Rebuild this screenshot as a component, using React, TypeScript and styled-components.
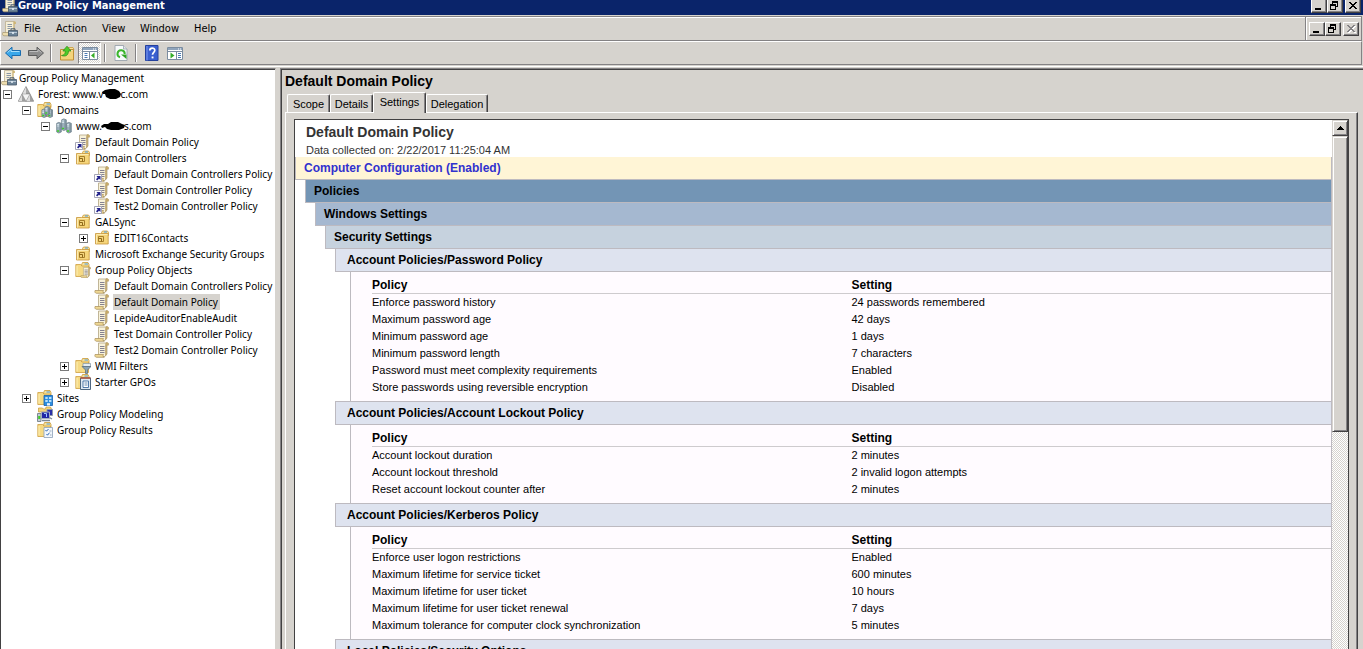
import React from "react";
import styled, { createGlobalStyle, css } from "styled-components";

const face = "#d6d3ce";
const shadow = "#848284";
const dark = "#424142";
const rule = "#bdbac0";
const uiFont = `"DejaVu Sans Condensed", "DejaVu Sans", sans-serif`;
const treeFont = `"Noto Sans", sans-serif`;
const reportFont = `"Liberation Sans", Arial, sans-serif`;

const GlobalStyle = createGlobalStyle`
  * { box-sizing: border-box; }
  body { margin: 0; background: ${face}; }
  button { font: inherit; color: inherit; margin: 0; padding: 0; border: 0; background: none; }
`;

const Window = styled.div`
  display: flex;
  flex-direction: column;
  height: 100vh;
  overflow: hidden;
  background: ${face};
  color: #000;
  font: 11px/16px ${uiFont};
`;

/* Title bar */

const TitleBar = styled.header`
  display: flex;
  align-items: flex-end;
  flex: none;
  height: 15px;
  padding: 0 2px 2px;
  overflow: hidden;
  background: #0a246a;
  color: #fff;
`;

const TitleText = styled.h1`
  margin: 0;
  flex: 1;
  font-size: 11px;
  line-height: 14px;
  font-weight: bold;
`;

const CaptionGroup = styled.div`
  display: flex;
  align-items: center;
`;

const CaptionButton = styled.button<{ $apart?: boolean }>`
  display: flex;
  flex: none;
  width: 16px;
  height: 14px;
  margin-left: ${(p) => (p.$apart ? 2 : 0)}px;
  border: 1px solid;
  border-color: #fff ${dark} ${dark} #fff;
  background: ${face};
  box-shadow: inset -1px -1px ${shadow};
`;

/* Menu and toolbar */

const MenuBar = styled.nav`
  display: flex;
  flex: none;
  height: 25px;
  margin: 1px 1px 0 0;
  border-top: 1px solid ${shadow};
  border-right: 1px solid ${shadow};
  border-bottom: 1px solid ${shadow};
  box-shadow: inset 1px 1px #fff;
`;

const MenuItems = styled.div`
  display: flex;
  align-items: center;
  flex: 1;
  padding-left: 2px;
  border-right: 1px solid ${shadow};
`;

const MenuItem = styled.button<{ $width: number }>`
  width: ${(p) => p.$width}px;
  height: 18px;
  padding-left: 6px;
  text-align: left;
`;

const ChildCaption = styled(CaptionGroup)`
  padding: 0 2px;
  border-left: 1px solid #fff;
`;

const ToolBar = styled.div`
  display: flex;
  align-items: center;
  flex: none;
  height: 24px;
  margin-right: 1px;
  border: 1px solid;
  border-color: #fff ${shadow} ${shadow} #fff;
`;

const ToolButton = styled.button<{ $pressed?: boolean }>`
  display: flex;
  align-items: center;
  justify-content: center;
  width: 23px;
  height: 22px;
  ${(p) =>
    p.$pressed &&
    css`
      border: 1px solid;
      border-color: ${shadow} #fff #fff ${shadow};
      background: repeating-conic-gradient(#fff 0 25%, ${face} 0 50%) 0 0 / 2px 2px;
    `}
`;

const ToolSeparator = styled.span`
  width: 2px;
  height: 18px;
  margin: 0 3px;
  border-left: 1px solid ${shadow};
  border-right: 1px solid #fff;
`;

/* Panes */

const Panes = styled.main`
  display: flex;
  flex: 1;
  min-height: 0;
  gap: 4px;
  margin-top: 1px;
  padding-top: 1px;
  border-top: 1px solid #fff;
`;

const Sunken = styled.section`
  padding: 1px 0 0 1px;
  border-top: 1px solid ${shadow};
  box-shadow: inset 1px 1px ${dark};
`;

const TreePane = styled(Sunken)`
  flex: none;
  width: 276px;
  overflow: hidden;
  border-right: 1px solid ${face};
  background: #fff;
`;

const Tree = styled.ul`
  margin: 0;
  padding: 0;
  list-style: none;
  font-family: ${treeFont};
  font-size: 10px;
`;

const TreeRow = styled.li<{ $level: number }>`
  display: flex;
  align-items: center;
  height: 16px;
  padding-left: ${(p) => (p.$level === 0 ? 0 : p.$level * 19 - 17)}px;
  white-space: nowrap;
`;

const Toggle = styled.button`
  display: flex;
  flex: none;
  width: 9px;
  height: 9px;
  margin-right: 6px;
`;

const NoToggle = styled.span`
  flex: none;
  width: 15px;
`;

const Label = styled.span<{ $selected?: boolean; $root?: boolean }>`
  display: flex;
  align-items: center;
  height: 16px;
  margin-left: ${(p) => (p.$root ? 1 : 3)}px;
  padding: 0 2px 0 1px;
  background: ${(p) => (p.$selected ? face : "transparent")};
`;

const Icon = styled.svg`
  display: block;
  flex: none;
`;

const Scribble = styled.svg`
  display: block;
  flex: none;
  margin: 0 -1px;
`;

const DetailPane = styled(Sunken)`
  display: flex;
  flex-direction: column;
  flex: 1;
  min-width: 0;
  border-left: 1px solid ${shadow};
  font-family: ${reportFont};
`;

const PaneTitle = styled.h2`
  margin: 0;
  padding: 3px 3px 0;
  height: 22px;
  font-size: 14px;
  line-height: 16px;
`;

const Tabs = styled.div`
  display: flex;
  align-items: flex-end;
  height: 20px;
  padding-left: 5px;
`;

const Tab = styled.button<{ $width: number; $active?: boolean }>`
  position: relative;
  width: ${(p) => p.$width}px;
  height: ${(p) => (p.$active ? 21 : 18)}px;
  padding-bottom: ${(p) => (p.$active ? 2 : 0)}px;
  margin-bottom: ${(p) => (p.$active ? -1 : 0)}px;
  line-height: 16px;
  text-align: center;
  border: solid;
  border-width: 1px 1px 0 1px;
  border-color: #fff ${dark} #fff #fff;
  border-radius: 2px 2px 0 0;
  background: ${face};
  box-shadow: inset -1px 0 ${shadow};
`;

const TabPage = styled.div`
  display: flex;
  flex: 1;
  min-height: 0;
  margin: 0 5px 0 3px;
  padding: 6px 8px 0 8px;
  border: solid;
  border-width: 1px 1px 0 1px;
  border-color: #fff ${dark} #fff #fff;
  box-shadow: inset -1px 0 ${shadow};
`;

const ReportFrame = styled.div`
  display: flex;
  flex: 1;
  min-width: 0;
  border: solid ${dark};
  border-width: 1px 1px 0 1px;
  background: #fff;
`;

/* Report */

const Report = styled.article`
  flex: 1;
  min-width: 0;
  overflow: hidden;
`;

const ReportHead = styled.header`
  height: 37px;
  padding: 4px 11px 0;
  color: #333;
`;

const ReportTitle = styled.h3`
  margin: 0;
  font-size: 14px;
  line-height: 17px;
`;

const ReportDate = styled.p`
  margin: 0;
  line-height: 19px;
  white-space: nowrap;
`;

const Band = styled.h4<{ $indent: number; $bg: string; $color?: string; $pad?: number; $ruled?: boolean }>`
  margin: 0 0 0 ${(p) => p.$indent}px;
  padding-left: ${(p) => p.$pad ?? 8}px;
  border: solid ${rule};
  border-width: ${(p) => (p.$ruled ? 1 : 0)}px 1px 1px 1px;
  background: ${(p) => p.$bg};
  color: ${(p) => p.$color ?? "#000"};
  font-size: 12px;
  line-height: 22px;
`;

const SectionBody = styled.div`
  margin-left: 55px;
  padding: 0 0 5px 21px;
  border-left: 1px solid ${rule};
  border-right: 1px solid ${rule};
  background: #fffbff;
`;

const PolicyTable = styled.table`
  width: 100%;
  table-layout: fixed;
  border-collapse: separate;
  border-spacing: 0;
  text-align: left;

  th {
    padding: 5px 0 0;
    border-bottom: 1px solid #cecbce;
    font-size: 12px;
    line-height: 16px;
  }

  td {
    padding: 0;
    line-height: 17px;
    white-space: nowrap;
  }
`;

/* Scroll bar of the report */

const ScrollTrack = styled.div`
  display: flex;
  flex-direction: column;
  flex: none;
  width: 16px;
  background: repeating-conic-gradient(#fff 0 25%, ${face} 0 50%) 0 0 / 2px 2px;
`;

const raised = css`
  border: 1px solid;
  border-color: ${face} ${dark} ${dark} ${face};
  background: ${face};
  box-shadow: inset 1px 1px #fff, inset -1px -1px ${shadow};
`;

const ScrollUp = styled.button`
  ${raised}
  display: flex;
  align-items: center;
  justify-content: center;
  flex: none;
  height: 16px;
`;

const ScrollThumb = styled.div`
  ${raised}
  flex: none;
  height: 56%;
`;

/* Icon drawings, all on a 16 by 16 grid */

const Scroll = ({ x = 0, y = 0 }: { x?: number; y?: number }) => (
  <g transform={`translate(${x} ${y})`}>
    <path d="M4.500 1h8.500v11l-2 2.500H3.500l1-2.500z" fill="#f8f2da" stroke="#b3a582" strokeWidth=".8" />
    <path d="M12 .8c2-.8 3 .5 2.500 2.400h-2v9l-1 1.500V3z" fill="#cdb06c" stroke="#a88f58" strokeWidth=".5" />
    <path d="M1 12.500h8.500c-.8.800-.5 2.800.8 2.800H2.500c-1.200 0-2-1.300-1.500-2.800z" fill="#efd893" stroke="#a68d58" strokeWidth=".7" />
    <path d="M6 4.500h4.500M6 6.500h4.500M6 8.500h4.500M6 10.500h4.500" stroke="#85828f" />
  </g>
);

const Folder = () => (
  <g>
    <path d="M6.500 3l1-2.500h5.500l1 2v3h-7z" fill="#f7e19a" stroke="#c99a38" strokeWidth=".8" />
    <path d="M9.500 2h3.500" stroke="#4a9be0" />
    <path d="M.8 2.500h5l1 1.500h6.700v10.500H.8z" fill="#f6da84" stroke="#cf9f40" strokeWidth=".8" />
    <path d="M2 4v9.500" stroke="#fdf0b8" />
  </g>
);

const Server = ({ x, y, h = 9 }: { x: number; y: number; h?: number }) => (
  <g transform={`translate(${x} ${y})`}>
    <path d={`M.4 1.300L2.500.4 5 1.300V${h - 1}L2.500 ${h}L.4 ${h - 1}z`} fill="#9fb2be" stroke="#5e7280" strokeWidth=".7" />
    <path d="M.8 2.500h2.200M.8 4h2.200" stroke="#e6f0f6" strokeWidth=".8" />
    <path d={`M.8 ${h - 2}h2`} stroke="#38d020" strokeWidth="1.500" />
    <path d={`M3.800 1.500v${h - 2.5}`} stroke="#71858f" />
  </g>
);

type IconName =
  | "console" | "forest" | "domains" | "domain" | "link" | "ou" | "gpos" | "gpo" | "wmi" | "starter"
  | "sites" | "modeling" | "results" | "back" | "forward" | "up" | "paneTree" | "refresh" | "help" | "paneAction";

const drawings: Record<IconName, React.ReactNode> = {
  console: (
    <>
      <path d="M3.500.5h8.500v10l-1 2.500h-8l.5-2z" fill="#f6efd8" stroke="#b5a787" strokeWidth=".7" />
      <path d="M11.500.5c2.200-.6 2.800 1 2.300 2.500h-1.300v6h-1z" fill="#cfb574" />
      <path d="M5.500 3.500h4.500M5.500 5.500h4.500M5.500 7.500h3" stroke="#8b97a6" />
      <path d="M.8 11.500h6v3.300H2c-1.500 0-1.800-2-1.200-3.300z" fill="#ecdcae" stroke="#a3956f" strokeWidth=".7" />
      <path d="M9 9.500V7.800h4v1.700" fill="none" stroke="#47586a" />
      <path d="M6.500 9.500h9v5.500h-9z" fill="#6c8397" stroke="#47586a" strokeWidth=".8" />
      <path d="M7 11.500h8" stroke="#b6c6d4" />
      <path d="M10.200 11h1.600v2h-1.600z" fill="#e4edf4" />
    </>
  ),
  forest: (
    <>
      <path d="M8 .5l4 7.500H4z" fill="#a9a9a9" stroke="#777" strokeWidth=".6" />
      <path d="M4 8l4 7.300H.3zM12 8l3.700 7.300H8z" fill="#a2a2a2" stroke="#777" strokeWidth=".6" />
      <path d="M4 8h8l-4 7.300z" fill="#f4f4f4" stroke="#999" strokeWidth=".6" />
      <path d="M8 1v6.700H4.600zM4 8.700v6.300H.8zM12 8.700v6.300H8.500z" fill="#dedede" />
    </>
  ),
  domains: (
    <>
      <Folder />
      <Server x={4.500} y={6.500} />
      <Server x={10.500} y={6.500} />
      <Server x={7.500} y={4} />
    </>
  ),
  domain: (
    <>
      <Server x={0.300} y={4} h={11} />
      <Server x={10.300} y={4} h={11} />
      <Server x={5.300} y={0.500} h={12} />
    </>
  ),
  link: (
    <>
      <Scroll />
      <path d="M.5 8.500h7v7h-7z" fill="#fff" stroke="#a5a5b5" />
      <path d="M2.500 10h4v4L5 12.700 3.200 14.500 2 13.200 3.700 11.500z" fill="#22228a" />
    </>
  ),
  ou: (
    <>
      <path d="M7.500 2.500l1-1.500h5l1 1.500v3h-7z" fill="#f7e19a" stroke="#c99a38" strokeWidth=".8" />
      <path d="M10 2h3" stroke="#4a9be0" />
      <path d="M1.500 3.500h5l1 0h6.700v10.500H1.500z" fill="#f5d57a" stroke="#c8953a" strokeWidth=".8" />
      <path d="M2.500 4.500h11M2.500 5v8.500" stroke="#fbeab0" />
      <path d="M4.500 6.500h5v5h-5z" fill="#f3d47c" stroke="#a67e2a" />
      <path d="M4.500 8.500h3v3" fill="none" stroke="#8d6818" />
    </>
  ),
  gpos: (
    <>
      <Folder />
      <g transform="translate(5.200 4.700) scale(.72)">
        <Scroll />
      </g>
    </>
  ),
  gpo: <Scroll />,
  wmi: (
    <>
      <Folder />
      <path d="M8 5.500h7.500v3H8z" fill="#e3edf4" stroke="#8194a3" strokeWidth=".7" />
      <path d="M7 8.500h9l-3.500 3.500v3.500h-2V12z" fill="#8ba5b7" stroke="#53697a" strokeWidth=".7" />
    </>
  ),
  starter: (
    <>
      <Folder />
      <path d="M5.500 4h10v11.500h-10z" fill="#dfe9f3" stroke="#4f6781" />
      <path d="M5.500 4h10" stroke="#b4553a" strokeWidth="1.500" />
      <path d="M8 7h5.500v6.500H8z" fill="#fff" stroke="#3f6ca0" strokeWidth=".9" />
      <path d="M9.500 9h3M9.500 11h3" stroke="#3f6ca0" strokeWidth=".8" />
    </>
  ),
  sites: (
    <>
      <Folder />
      <path d="M7 5.500h8.500v10H7z" fill="#2f8ede" stroke="#1460ae" strokeWidth=".8" />
      <path d="M8.300 7h2.400v2H8.300zM12 7h2.400v2H12zM8.300 10h2.400v2H8.300zM12 10h2.400v2H12z" fill="#b8e0fb" />
      <path d="M10 13.200h3v2.300h-3z" fill="#e8f5ff" />
    </>
  ),
  modeling: (
    <>
      <path d="M1.500 5V2h4l1 1h2l.5-2h4.500l1 2v3H1.500z" fill="#f3d47a" stroke="#c99a38" strokeWidth=".7" />
      <path d="M.5 7.500H4v8H.5z" fill="#c4ccd4" stroke="#67747f" strokeWidth=".8" />
      <path d="M1.200 10h2v3h-2z" fill="#3ecb2c" />
      <path d="M10 3.500h5.500v6H10z" fill="#2a2fa8" stroke="#8c97a8" strokeWidth=".9" />
      <path d="M4.500 6h8v6.500h-8z" fill="#2026a6" stroke="#a4afc0" />
      <path d="M7 7.500h2.500v3.500" stroke="#9cc2ff" fill="none" />
      <path d="M5 14.500h8M12.500 11.500l2.500 1.500" stroke="#7a8796" strokeWidth="1.300" />
    </>
  ),
  results: (
    <>
      <Folder />
      <path d="M7 5.500h8.500v10H7z" fill="#f2f7fc" stroke="#8ba0b8" strokeWidth=".8" />
      <path d="M8.500 8l1 1.200L11.500 7M9.500 12l1 1.200 2-2.500" fill="none" stroke="#2c69b8" />
      <path d="M12.500 9h2M13 13h1.500" stroke="#9aaabd" />
    </>
  ),
  back: (
    <>
      <path d="M.5 8L7 2.200v3.300h8.500v5H7v3.300z" fill="#38a7ea" stroke="#1a6cae" strokeLinejoin="round" />
      <path d="M2.500 7.500L6 4.500v2h8.500" fill="none" stroke="#a6defa" />
    </>
  ),
  forward: (
    <>
      <path d="M15.500 8L9 2.200v3.300H.5v5H9v3.300z" fill="#8e8e8e" stroke="#5c5c5c" strokeLinejoin="round" />
      <path d="M1.500 6.500H10v-2l3.500 3" fill="none" stroke="#bdbdbd" />
    </>
  ),
  up: (
    <>
      <path d="M8 4.500l1-2h5l1 2z" fill="#f7e19a" stroke="#c99a38" strokeWidth=".8" />
      <path d="M1.500 4.500h13v10.500h-13z" fill="#f4d47a" stroke="#c08e35" />
      <path d="M2.500 5.500h11" stroke="#fbeab0" />
      <path d="M2.500 10.500c3.300-.5 3.800-2.500 3.800-4.500H3.800L8 1.200 12 6H9.500c0 4-2.500 6-7 4.500z" fill="#4ecb28" stroke="#25891a" strokeWidth=".7" />
    </>
  ),
  paneTree: (
    <>
      <path d="M.5 2.500h15v12H.5z" fill="#fff" stroke="#7b8ca0" />
      <path d="M1 3h14v2H1z" fill="#8fa4bc" />
      <path d="M11 4h1M13 4h1" stroke="#fff" />
      <path d="M7.500 6v8.500M1 6.500h14" stroke="#7b8ca0" />
      <path d="M2.500 8.500h3M2.500 10.500h3M2.500 12.500h3" stroke="#4a7ab4" />
      <path d="M12.500 7.500v6L9 10.500z" fill="#36ad28" />
    </>
  ),
  refresh: (
    <>
      <path d="M2 .5h8.500L14 4v11.500H2z" fill="#f8fafc" stroke="#9aa3ab" strokeWidth=".9" />
      <path d="M10.500.5V4H14" fill="#dde4ea" stroke="#9aa3ab" strokeWidth=".8" />
      <path d="M7 12.300A3.600 3.600 0 1 1 11.700 9" fill="none" stroke="#3cb62c" strokeWidth="2" />
      <path d="M8 9.500h5.500v4.500z" fill="#2fa522" />
    </>
  ),
  help: (
    <>
      <path d="M1.500.5h12.500v15H1.500z" fill="#3a5fd0" stroke="#24409c" />
      <path d="M3 1v14.500" stroke="#7d9aee" />
      <path d="M5.800 5.500c0-3.200 5-3.200 5-.2 0 2-2.300 2-2.300 4.500" fill="none" stroke="#fff" strokeWidth="1.700" />
      <path d="M7.600 11.500h1.900v1.900H7.600z" fill="#fff" />
    </>
  ),
  paneAction: (
    <>
      <path d="M.5 2.500h15v12H.5z" fill="#fff" stroke="#7b8ca0" />
      <path d="M1 3h14v2H1z" fill="#8fa4bc" />
      <path d="M11 4h1M13 4h1" stroke="#fff" />
      <path d="M9.500 6v8.500M1 6.500h14" stroke="#7b8ca0" />
      <path d="M11 8.500h3M11 10.500h3M11 12.500h3" stroke="#4a7ab4" />
      <path d="M3.500 7.500v6L7.500 10.500z" fill="#36ad28" />
    </>
  ),
};

const Glyph = ({ name }: { name: IconName }) => (
  <Icon width="16" height="16" viewBox="0 0 16 16" aria-hidden="true">
    {drawings[name]}
  </Icon>
);

const MinimizeMark = () => (
  <Icon width="14" height="12" viewBox="0 0 14 12" shapeRendering="crispEdges">
    <path d="M3 8h6v2H3z" />
  </Icon>
);

const RestoreMark = () => (
  <Icon width="14" height="12" viewBox="0 0 14 12" shapeRendering="crispEdges">
    <path d="M4 1h6v2H4zM4 3h1v1H4zM9 3h1v4H9zM8 6h1v1H8zM2 4h6v2H2zM2 6h1v4H2zM7 6h1v4H7zM3 9h4v1H3z" />
  </Icon>
);

const CloseMark = ({ off }: { off?: boolean }) => (
  <Icon width="14" height="12" viewBox="0 0 14 12" shapeRendering="crispEdges">
    {off && (
      <path transform="translate(1 1)" fill="#fff" d="M3 2h2v1H3zM4 3h2v1H4zM5 4h4v1H5zM6 5h2v1H6zM5 6h4v1H5zM4 7h2v1H4zM3 8h2v1H3zM9 2h2v1H9zM8 3h2v1H8zM8 7h2v1H8zM9 8h2v1H9z" />
    )}
    <path fill={off ? shadow : "#000"} d="M3 2h2v1H3zM4 3h2v1H4zM5 4h4v1H5zM6 5h2v1H6zM5 6h4v1H5zM4 7h2v1H4zM3 8h2v1H3zM9 2h2v1H9zM8 3h2v1H8zM8 7h2v1H8zM9 8h2v1H9z" />
  </Icon>
);

const ToggleMark = ({ open }: { open: boolean }) => (
  <Icon width="9" height="9" viewBox="0 0 9 9" shapeRendering="crispEdges">
    <path d="M.5.5h8v8h-8z" fill="#fff" stroke="#7b7b7b" />
    <path d={open ? "M2 4h5v1H2z" : "M2 4h5v1H2zM4 2h1v5H4z"} />
  </Icon>
);

/* Data */

type Node = { level: number; icon: IconName; label: React.ReactNode; open?: boolean; selected?: boolean };

const nodes: Node[] = [
  { level: 0, icon: "console", label: "Group Policy Management" },
  {
    level: 1,
    icon: "forest",
    open: true,
    label: (
      <>
        Forest: www.v
        <Scribble width="19" height="12" viewBox="0 0 19 12" aria-hidden="true">
          <path d="M0 4l3-2 5-1h5l4 2 2 3-1 3-4 2H8L4 9 3 6 1 6z" />
        </Scribble>
        c.com
      </>
    ),
  },
  { level: 2, icon: "domains", label: "Domains", open: true },
  {
    level: 3,
    icon: "domain",
    open: true,
    label: (
      <>
        www.
        <Scribble width="24" height="12" viewBox="0 0 24 12" aria-hidden="true">
          <path d="M0 6l3-2 4 0 3-2h7l4 2 3 1-1 3-5 2h-8L6 9 4 7 1 8z" />
        </Scribble>
        s.com
      </>
    ),
  },
  { level: 4, icon: "link", label: "Default Domain Policy" },
  { level: 4, icon: "ou", label: "Domain Controllers", open: true },
  { level: 5, icon: "link", label: "Default Domain Controllers Policy" },
  { level: 5, icon: "link", label: "Test Domain Controller Policy" },
  { level: 5, icon: "link", label: "Test2 Domain Controller Policy" },
  { level: 4, icon: "ou", label: "GALSync", open: true },
  { level: 5, icon: "ou", label: "EDIT16Contacts", open: false },
  { level: 4, icon: "ou", label: "Microsoft Exchange Security Groups" },
  { level: 4, icon: "gpos", label: "Group Policy Objects", open: true },
  { level: 5, icon: "gpo", label: "Default Domain Controllers Policy" },
  { level: 5, icon: "gpo", label: "Default Domain Policy", selected: true },
  { level: 5, icon: "gpo", label: "LepideAuditorEnableAudit" },
  { level: 5, icon: "gpo", label: "Test Domain Controller Policy" },
  { level: 5, icon: "gpo", label: "Test2 Domain Controller Policy" },
  { level: 4, icon: "wmi", label: "WMI Filters", open: false },
  { level: 4, icon: "starter", label: "Starter GPOs", open: false },
  { level: 2, icon: "sites", label: "Sites", open: false },
  { level: 2, icon: "modeling", label: "Group Policy Modeling" },
  { level: 2, icon: "results", label: "Group Policy Results" },
];

const menus: [string, number][] = [
  ["File", 32],
  ["Action", 46],
  ["View", 38],
  ["Window", 54],
  ["Help", 36],
];

const tabs: [string, number][] = [
  ["Scope", 43],
  ["Details", 43],
  ["Settings", 53],
  ["Delegation", 62],
];

const sections: { title: string; rows: [string, string][] }[] = [
  {
    title: "Account Policies/Password Policy",
    rows: [
      ["Enforce password history", "24 passwords remembered"],
      ["Maximum password age", "42 days"],
      ["Minimum password age", "1 days"],
      ["Minimum password length", "7 characters"],
      ["Password must meet complexity requirements", "Enabled"],
      ["Store passwords using reversible encryption", "Disabled"],
    ],
  },
  {
    title: "Account Policies/Account Lockout Policy",
    rows: [
      ["Account lockout duration", "2 minutes"],
      ["Account lockout threshold", "2 invalid logon attempts"],
      ["Reset account lockout counter after", "2 minutes"],
    ],
  },
  {
    title: "Account Policies/Kerberos Policy",
    rows: [
      ["Enforce user logon restrictions", "Enabled"],
      ["Maximum lifetime for service ticket", "600 minutes"],
      ["Maximum lifetime for user ticket", "10 hours"],
      ["Maximum lifetime for user ticket renewal", "7 days"],
      ["Maximum tolerance for computer clock synchronization", "5 minutes"],
    ],
  },
  { title: "Local Policies/Security Options", rows: [] },
];

const Captions = ({ child }: { child?: boolean }) => (
  <>
    <CaptionButton aria-label="Minimize"><MinimizeMark /></CaptionButton>
    <CaptionButton aria-label="Restore"><RestoreMark /></CaptionButton>
    <CaptionButton aria-label="Close" $apart disabled={child}><CloseMark off={child} /></CaptionButton>
  </>
);

export default function App() {
  return (
    <Window>
      <GlobalStyle />
      <TitleBar>
        <Glyph name="console" />
        <TitleText>Group Policy Management</TitleText>
        <CaptionGroup><Captions /></CaptionGroup>
      </TitleBar>

      <MenuBar>
        <MenuItems>
          <Glyph name="console" />
          {menus.map(([name, width]) => (
            <MenuItem key={name} $width={width}>{name}</MenuItem>
          ))}
        </MenuItems>
        <ChildCaption><Captions child /></ChildCaption>
      </MenuBar>

      <ToolBar>
        <ToolButton aria-label="Back"><Glyph name="back" /></ToolButton>
        <ToolButton aria-label="Forward"><Glyph name="forward" /></ToolButton>
        <ToolSeparator />
        <ToolButton aria-label="Up one level"><Glyph name="up" /></ToolButton>
        <ToolButton aria-label="Show console tree" $pressed><Glyph name="paneTree" /></ToolButton>
        <ToolSeparator />
        <ToolButton aria-label="Refresh"><Glyph name="refresh" /></ToolButton>
        <ToolSeparator />
        <ToolButton aria-label="Help"><Glyph name="help" /></ToolButton>
        <ToolButton aria-label="Show action pane"><Glyph name="paneAction" /></ToolButton>
      </ToolBar>

      <Panes>
        <TreePane>
          <Tree>
            {nodes.map((node, i) => (
              <TreeRow key={i} $level={node.level}>
                {node.open !== undefined ? (
                  <Toggle aria-label={node.open ? "Collapse" : "Expand"}><ToggleMark open={node.open} /></Toggle>
                ) : (
                  node.level > 0 && <NoToggle />
                )}
                <Glyph name={node.icon} />
                <Label $selected={node.selected} $root={node.level === 0}>{node.label}</Label>
              </TreeRow>
            ))}
          </Tree>
        </TreePane>

        <DetailPane>
          <PaneTitle>Default Domain Policy</PaneTitle>
          <Tabs role="tablist">
            {tabs.map(([name, width]) => (
              <Tab key={name} role="tab" aria-selected={name === "Settings"} $active={name === "Settings"} $width={width}>
                {name}
              </Tab>
            ))}
          </Tabs>
          <TabPage>
            <ReportFrame>
              <Report>
                <ReportHead>
                  <ReportTitle>Default Domain Policy</ReportTitle>
                  <ReportDate>Data collected on: 2/22/2017 11:25:04 AM</ReportDate>
                </ReportHead>
                <Band $indent={0} $bg="#fff5d6" $color="#3131ce">Computer Configuration (Enabled)</Band>
                <Band $indent={10} $bg="#7395b5">Policies</Band>
                <Band $indent={20} $bg="#a5b8d0">Windows Settings</Band>
                <Band $indent={30} $bg="#c6d2de">Security Settings</Band>
                {sections.map((section, i) => (
                  <React.Fragment key={section.title}>
                    <Band $indent={40} $bg="#dee3ef" $pad={11} $ruled={i > 0}>{section.title}</Band>
                    <SectionBody>
                      <PolicyTable>
                        <thead>
                          <tr>
                            <th scope="col">Policy</th>
                            <th scope="col">Setting</th>
                          </tr>
                        </thead>
                        <tbody>
                          {section.rows.map(([policy, setting]) => (
                            <tr key={policy}>
                              <td>{policy}</td>
                              <td>{setting}</td>
                            </tr>
                          ))}
                        </tbody>
                      </PolicyTable>
                    </SectionBody>
                  </React.Fragment>
                ))}
              </Report>
              <ScrollTrack>
                <ScrollUp aria-label="Scroll up">
                  <Icon width="7" height="4" viewBox="0 0 7 4" shapeRendering="crispEdges">
                    <path d="M3 0h1v1H3zM2 1h3v1H2zM1 2h5v1H1zM0 3h7v1H0z" />
                  </Icon>
                </ScrollUp>
                <ScrollThumb />
              </ScrollTrack>
            </ReportFrame>
          </TabPage>
        </DetailPane>
      </Panes>
    </Window>
  );
}
